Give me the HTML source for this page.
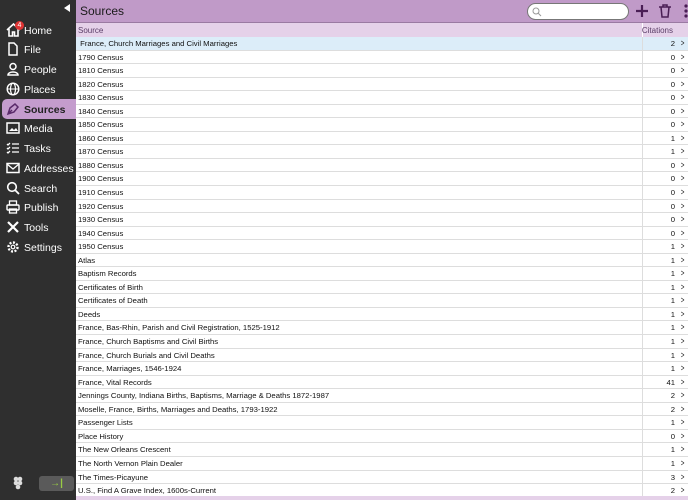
<!DOCTYPE html>
<html><head><meta charset="utf-8"><style>
*{margin:0;padding:0;box-sizing:border-box}
body{width:688px;height:500px;overflow:hidden;font-family:"Liberation Sans",sans-serif;background:#fff;position:relative}
#side{position:absolute;left:0;top:0;width:76px;height:500px;background:#2f2f2f;color:#fff}
.nav{position:absolute;left:2px;width:74px;height:20px;font-size:10.5px;display:flex;align-items:center;padding-left:22px;padding-top:1px}
.nav svg{position:absolute;left:4px;top:3px}
.sel{background:#c49ccd;color:#222;border-radius:5px 0 0 5px;font-weight:bold}
#top{position:absolute;left:76px;top:0;width:612px;height:23px;background:#c09ac8;border-bottom:1px solid #9a7aa2}
#top .t{position:absolute;left:4px;top:4px;font-size:12px;color:#1a1a1a}
#search{position:absolute;left:451px;top:3px;width:102px;height:17px;border-radius:9px;background:#fff;border:1px solid #777}
#hdr{position:absolute;left:76px;top:23px;width:612px;height:14px;background:#e5d1e9;font-size:8px;color:#5a3d66}
#rows{position:absolute;left:76px;top:37px;width:612px}
.r{height:13.55px;border-bottom:1px solid #ddd;font-size:7.7px;color:#111;position:relative;line-height:13px;padding-left:2px}
.r b{font-weight:normal;position:absolute;right:13px;top:0}
.r i{position:absolute;right:3px;top:0;font-style:normal;font-size:9px;transform:scaleX(0.7)}
.r:after{content:"";position:absolute;left:566px;top:0;height:100%;border-left:1px solid #ddd}
#bot{position:absolute;left:76px;top:496px;width:612px;height:4px;background:#e5d1e9}
</style></head><body>
<div id="side">
<div style="position:absolute;left:64px;top:4px;width:0;height:0;border-top:4px solid transparent;border-bottom:4px solid transparent;border-right:6px solid #fff"></div>
<div class="nav" style="top:20px"><svg width="15" height="14" viewBox="0 0 15 14"><path d="M1 7L7.5 1L14 7M3 6v7h3.5v-4h2v4H12V6" fill="none" stroke="#fff" stroke-width="1.6"/></svg>Home<span style="position:absolute;left:13px;top:1px;width:9px;height:9px;border-radius:50%;background:#d33;font-size:7px;text-align:center;line-height:9px">4</span></div>
<div class="nav" style="top:39px"><svg width="14" height="14"><path d="M3 1h5l3 3v9H3z" fill="none" stroke="#fff" stroke-width="1.5"/></svg>File</div>
<div class="nav" style="top:59px"><svg width="14" height="14"><circle cx="7" cy="4.5" r="3" fill="none" stroke="#fff" stroke-width="1.5"/><path d="M2 13c0-4 10-4 10 0z" fill="none" stroke="#fff" stroke-width="1.5"/></svg>People</div>
<div class="nav" style="top:79px"><svg width="14" height="14"><circle cx="7" cy="7" r="5.8" fill="none" stroke="#fff" stroke-width="1.4"/><ellipse cx="7" cy="7" rx="2.5" ry="5.8" fill="none" stroke="#fff" stroke-width="1.2"/><path d="M1 7h12" stroke="#fff"/></svg>Places</div>
<div class="nav sel" style="top:99px"><svg width="14" height="14"><path d="M2 12l2-6 5-4 3 3-4 5z M2 12l4-4" fill="none" stroke="#5a2a6a" stroke-width="1.5"/></svg>Sources</div>
<div class="nav" style="top:118px"><svg width="14" height="14"><rect x="1" y="2" width="12" height="10" fill="none" stroke="#fff" stroke-width="1.5"/><path d="M3 10l3-3 2 2 2-2 2 3z" fill="#fff"/></svg>Media</div>
<div class="nav" style="top:138px"><svg width="14" height="14"><path d="M1 3l1 1 2-2M1 7l1 1 2-2M1 11l1 1 2-2M6 3h7M6 7h7M6 11h7" fill="none" stroke="#fff" stroke-width="1.3"/></svg>Tasks</div>
<div class="nav" style="top:158px"><svg width="14" height="14"><rect x="1" y="2.5" width="12" height="9" fill="none" stroke="#fff" stroke-width="1.5"/><path d="M1 3l6 5 6-5" fill="none" stroke="#fff" stroke-width="1.3"/></svg>Addresses</div>
<div class="nav" style="top:178px"><svg width="14" height="14"><circle cx="6" cy="6" r="4.3" fill="none" stroke="#fff" stroke-width="1.6"/><path d="M9 9l4 4" stroke="#fff" stroke-width="1.8"/></svg>Search</div>
<div class="nav" style="top:197px"><svg width="14" height="14"><rect x="3.5" y="1" width="7" height="4" fill="none" stroke="#fff" stroke-width="1.3"/><rect x="1" y="5" width="12" height="5" rx="1" fill="none" stroke="#fff" stroke-width="1.4"/><rect x="3.5" y="9" width="7" height="4" fill="none" stroke="#fff" stroke-width="1.3"/></svg>Publish</div>
<div class="nav" style="top:217px"><svg width="14" height="14"><path d="M2 2l10 10M12 2L2 12" stroke="#fff" stroke-width="2.2"/></svg>Tools</div>
<div class="nav" style="top:237px"><svg width="14" height="14"><circle cx="7" cy="7" r="4.5" fill="none" stroke="#fff" stroke-width="2.4" stroke-dasharray="2 1.5"/><circle cx="7" cy="7" r="1.8" fill="none" stroke="#fff" stroke-width="1.2"/></svg>Settings</div>
<svg width="12" height="14" style="position:absolute;left:12px;top:476px"><circle cx="4" cy="3" r="2.3" fill="#ddd"/><circle cx="8" cy="3" r="2.3" fill="#ddd"/><circle cx="4" cy="7" r="2.3" fill="#ddd"/><circle cx="8" cy="7" r="2.3" fill="#ddd"/><circle cx="6" cy="11" r="2.3" fill="#ddd"/></svg>
<div style="position:absolute;left:39px;top:476px;width:35px;height:15px;background:#5a5a5a;border-radius:3px;color:#9c4;font-size:10px;text-align:center;line-height:15px;font-weight:bold">→|</div>
</div>
<div id="top"><span class="t">Sources</span><div id="search"><svg width="10" height="10" style="position:absolute;left:4px;top:3px"><circle cx="4" cy="4" r="3" fill="none" stroke="#999"/><path d="M6 6l3 3" stroke="#999"/></svg></div>
<svg width="14" height="14" style="position:absolute;left:559px;top:4px"><path d="M7 1v12M1 7h12" stroke="#4a1e55" stroke-width="2.2"/></svg>
<svg width="14" height="14" style="position:absolute;left:582px;top:4px"><path d="M1 3h12M5 3V1h4v2M3 3l1 10h6l1-10" fill="none" stroke="#4a1e55" stroke-width="1.5"/></svg>
<svg width="6" height="16" style="position:absolute;left:607px;top:3px"><circle cx="3" cy="3" r="1.6" fill="#4a1e55"/><circle cx="3" cy="8" r="1.6" fill="#4a1e55"/><circle cx="3" cy="13" r="1.6" fill="#4a1e55"/></svg>
</div>
<div id="hdr"><span style="position:absolute;left:2px;top:3px">Source</span><span style="position:absolute;left:566px;top:0;height:14px;border-left:1px solid #fff"></span><span style="position:absolute;right:15px;top:3px">Citations</span></div>
<div id="rows">
<div class="r" style="background:#dcedf9">&nbsp;France, Church Marriages and Civil Marriages<b>2</b><i>&gt;</i></div>
<div class="r">1790 Census<b>0</b><i>&gt;</i></div>
<div class="r">1810 Census<b>0</b><i>&gt;</i></div>
<div class="r">1820 Census<b>0</b><i>&gt;</i></div>
<div class="r">1830 Census<b>0</b><i>&gt;</i></div>
<div class="r">1840 Census<b>0</b><i>&gt;</i></div>
<div class="r">1850 Census<b>0</b><i>&gt;</i></div>
<div class="r">1860 Census<b>1</b><i>&gt;</i></div>
<div class="r">1870 Census<b>1</b><i>&gt;</i></div>
<div class="r">1880 Census<b>0</b><i>&gt;</i></div>
<div class="r">1900 Census<b>0</b><i>&gt;</i></div>
<div class="r">1910 Census<b>0</b><i>&gt;</i></div>
<div class="r">1920 Census<b>0</b><i>&gt;</i></div>
<div class="r">1930 Census<b>0</b><i>&gt;</i></div>
<div class="r">1940 Census<b>0</b><i>&gt;</i></div>
<div class="r">1950 Census<b>1</b><i>&gt;</i></div>
<div class="r">Atlas<b>1</b><i>&gt;</i></div>
<div class="r">Baptism Records<b>1</b><i>&gt;</i></div>
<div class="r">Certificates of Birth<b>1</b><i>&gt;</i></div>
<div class="r">Certificates of Death<b>1</b><i>&gt;</i></div>
<div class="r">Deeds<b>1</b><i>&gt;</i></div>
<div class="r">France, Bas-Rhin, Parish and Civil Registration, 1525-1912<b>1</b><i>&gt;</i></div>
<div class="r">France, Church Baptisms and Civil Births<b>1</b><i>&gt;</i></div>
<div class="r">France, Church Burials and Civil Deaths<b>1</b><i>&gt;</i></div>
<div class="r">France, Marriages, 1546-1924<b>1</b><i>&gt;</i></div>
<div class="r">France, Vital Records<b>41</b><i>&gt;</i></div>
<div class="r">Jennings County, Indiana Births, Baptisms, Marriage &amp; Deaths 1872-1987<b>2</b><i>&gt;</i></div>
<div class="r">Moselle, France, Births, Marriages and Deaths, 1793-1922<b>2</b><i>&gt;</i></div>
<div class="r">Passenger Lists<b>1</b><i>&gt;</i></div>
<div class="r">Place History<b>0</b><i>&gt;</i></div>
<div class="r">The New Orleans Crescent<b>1</b><i>&gt;</i></div>
<div class="r">The North Vernon Plain Dealer<b>1</b><i>&gt;</i></div>
<div class="r">The Times-Picayune<b>3</b><i>&gt;</i></div>
<div class="r">U.S., Find A Grave Index, 1600s-Current<b>2</b><i>&gt;</i></div>
</div>
<div id="bot"></div>
</body></html>
